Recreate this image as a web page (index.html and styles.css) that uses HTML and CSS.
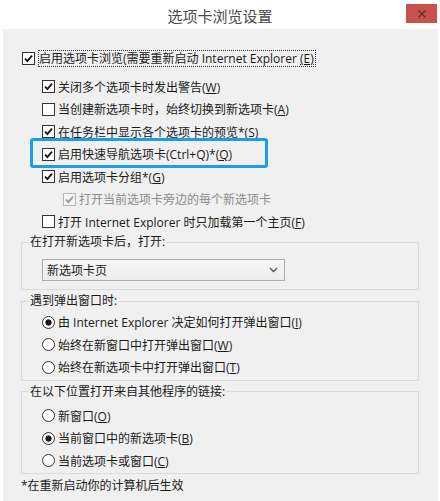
FILE: index.html
```html
<!DOCTYPE html>
<html lang="zh-CN">
<head>
<meta charset="utf-8">
<title>选项卡浏览设置</title>
<link rel="stylesheet" href="styles.css">
</head>
<body>
<div class="window">
  <div class="titlebar">
    <span></span>
    <span class="title">选项卡浏览设置</span>
    <span class="close"><svg width="10" height="10" viewBox="0 0 10 10"><path d="M1.5 1.5 L8.5 8.5 M8.5 1.5 L1.5 8.5" stroke="#6b2a28" stroke-width="1.3"/></svg></span>
  </div>
  <div class="content">
    <div class="row top">
      <span class="cb"><svg viewBox="0 0 11 11"><polyline points="2,5.6 4.4,8 9,2.6" /></svg></span>
      <span class="focus">启用选项卡浏览(需要重新启动 Internet Explorer <u>(E)</u></span>
    </div>
    <div class="row l1">
      <span class="cb"><svg viewBox="0 0 11 11"><polyline points="2,5.6 4.4,8 9,2.6" /></svg></span>
      <span>关闭多个选项卡时发出警告(<u>W</u>)</span>
    </div>
    <div class="row l1">
      <span class="cb"></span>
      <span>当创建新选项卡时，始终切换到新选项卡(<u>A</u>)</span>
    </div>
    <div class="row l1">
      <span class="cb"><svg viewBox="0 0 11 11"><polyline points="2,5.6 4.4,8 9,2.6" /></svg></span>
      <span>在任务栏中显示各个选项卡的预览*(<u>S</u>)</span>
    </div>
    <div class="row l1 marked">
      <span class="cb"><svg viewBox="0 0 11 11"><polyline points="2,5.6 4.4,8 9,2.6" /></svg></span>
      <span>启用快速导航选项卡(Ctrl+Q)*(<u>Q</u>)</span>
    </div>
    <div class="row l1">
      <span class="cb"><svg viewBox="0 0 11 11"><polyline points="2,5.6 4.4,8 9,2.6" /></svg></span>
      <span>启用选项卡分组*(<u>G</u>)</span>
    </div>
    <div class="row l2 disabled">
      <span class="cb"><svg viewBox="0 0 11 11"><polyline points="2,5.6 4.4,8 9,2.6" /></svg></span>
      <span>打开当前选项卡旁边的每个新选项卡</span>
    </div>
    <div class="row l1">
      <span class="cb"></span>
      <span>打开 Internet Explorer 时只加载第一个主页(<u>F</u>)</span>
    </div>

    <fieldset class="group g1">
      <legend>在打开新选项卡后，打开:</legend>
      <div class="select">
        <span>新选项卡页</span>
        <svg width="9" height="6" viewBox="0 0 9 6"><polyline points="1,1 4.5,4.5 8,1" fill="none" stroke="#555" stroke-width="1.4"/></svg>
      </div>
    </fieldset>

    <fieldset class="group g2">
      <legend>遇到弹出窗口时:</legend>
      <div class="row in">
        <span class="rb on"></span>
        <span>由 Internet Explorer 决定如何打开弹出窗口(<u>I</u>)</span>
      </div>
      <div class="row in">
        <span class="rb"></span>
        <span>始终在新窗口中打开弹出窗口(<u>W</u>)</span>
      </div>
      <div class="row in">
        <span class="rb"></span>
        <span>始终在新选项卡中打开弹出窗口(<u>T</u>)</span>
      </div>
    </fieldset>

    <fieldset class="group g3">
      <legend>在以下位置打开来自其他程序的链接:</legend>
      <div class="row in">
        <span class="rb"></span>
        <span>新窗口(<u>O</u>)</span>
      </div>
      <div class="row in">
        <span class="rb on"></span>
        <span>当前窗口中的新选项卡(<u>B</u>)</span>
      </div>
      <div class="row in">
        <span class="rb"></span>
        <span>当前选项卡或窗口(<u>C</u>)</span>
      </div>
    </fieldset>

    <div class="note">*在重新启动你的计算机后生效</div>
  </div>
</div>
</body>
</html>
```
FILE: styles.css
```css
html, body {
  margin: 0;
  padding: 0;
  background: #ffffff;
}
body {
  width: 440px;
  height: 501px;
  overflow: hidden;
  font-family: "Open Sans", "Noto Sans CJK SC", sans-serif;
  font-size: 12px;
  color: #1a1a1a;
}
.window {
  width: 440px;
  height: 501px;
  display: flex;
  flex-direction: column;
}
.titlebar {
  height: 29px;
  display: grid;
  grid-template-columns: 1fr auto 1fr;
  align-items: start;
  background: #ffffff;
}
.title {
  font-size: 15px;
  color: #4a4a4a;
  line-height: 20px;
  padding-top: 6px;
  font-family: "Noto Sans CJK SC", sans-serif;
}
.close {
  justify-self: end;
  margin: 4px 3px 0 0;
  width: 31px;
  height: 19px;
  background: #c8504d;
  display: flex;
  align-items: center;
  justify-content: center;
}
.content {
  flex: 1;
  margin: 0 2px 0 3px;
  background: #f0f0f0;
  padding: 18px 19px 0 18px;
}
.row {
  display: flex;
  align-items: center;
  gap: 3px;
  height: 22.5px;
  white-space: nowrap;
}
.row.top {
  margin-left: 1px;
  margin-bottom: 6px;
}
.row.l1 { margin-left: 21px; }
.row.l2 { margin-left: 42px; }
.row.in { margin-left: 13px; }
.cb {
  width: 13px;
  height: 13px;
  box-sizing: border-box;
  border: 1px solid #333333;
  background: #ffffff;
  flex-shrink: 0;
  display: flex;
}
.cb svg {
  width: 11px;
  height: 11px;
}
.cb polyline {
  fill: none;
  stroke: #1a1a1a;
  stroke-width: 1.9;
}
.disabled { color: #8c8c8c; }
.disabled .cb {
  border-color: #b5b5b5;
  background: #f4f4f4;
}
.disabled .cb polyline { stroke: #9a9a9a; }
.focus {
  border: 1px dotted #333333;
  line-height: 15px;
  padding: 0 1px 0 0;
}
.marked { position: relative; }
.marked::after {
  content: "";
  position: absolute;
  left: -12px;
  top: -5px;
  width: 238px;
  height: 30px;
  box-sizing: border-box;
  border: 3.5px solid #1b9fe4;
  border-radius: 3px;
}
.rb {
  width: 13px;
  height: 13px;
  box-sizing: border-box;
  border: 1px solid #333333;
  border-radius: 50%;
  background: #ffffff;
  flex-shrink: 0;
}
.rb.on {
  background: radial-gradient(circle, #1a1a1a 0 2.8px, #ffffff 3.4px);
}
.group {
  margin: 0;
  min-width: 0;
  border: 1px solid #dadada;
  padding: 0 0 2px 7px;
}
.group legend {
  padding: 0 1px;
  line-height: 18px;
}
.g1 { padding-bottom: 8px; }
.g2 { margin-top: 2px; padding-top: 1px; padding-bottom: 1px; }
.g3 { margin-top: 2px; padding-top: 4px; padding-bottom: 1px; }
.select {
  margin: 8px 0 0 13px;
  width: 243px;
  height: 22px;
  box-sizing: border-box;
  border: 1px solid #acacac;
  background: linear-gradient(#f6f6f6, #ededed);
  display: flex;
  align-items: center;
  justify-content: space-between;
  padding: 0 6px 0 4px;
}
.note {
  margin-top: 3px;
  line-height: 18px;
}
```
